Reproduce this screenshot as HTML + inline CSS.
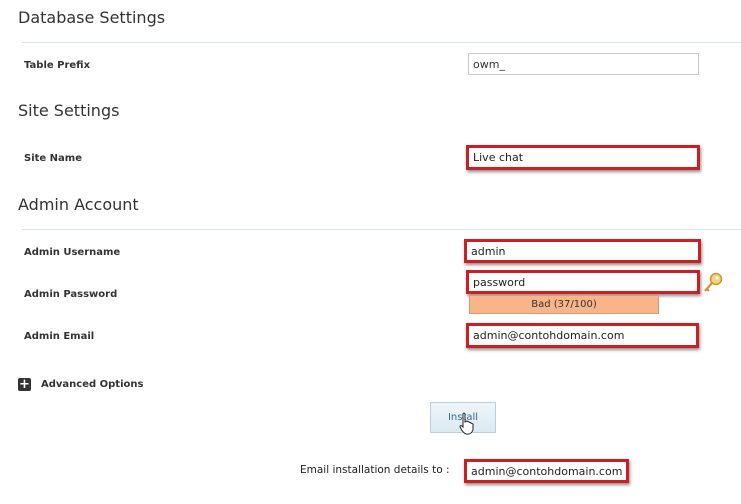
<!DOCTYPE html>
<html><head><style>
body{margin:0;width:741px;height:504px;background:#fff;position:relative;overflow:hidden;font-family:"DejaVu Sans","Liberation Sans",sans-serif;color:#333}
.a{position:absolute}
.h{font-family:"DejaVu Sans",sans-serif;font-size:16px;color:#333;left:18px}
.l{font-size:10px;font-weight:bold;left:24px;color:#333}
.ln{left:22px;right:0;height:1px;background:#d6e2e8}
.r{border:3px solid #cc1f24;box-shadow:1px 2px 3px rgba(0,0,0,.45);background:#fff;box-sizing:border-box;font-size:11px;padding-left:4px;line-height:19px;color:#222}
</style></head><body>
<div class="a h" style="top:8px">Database Settings</div>
<div class="a ln" style="top:42px"></div>
<div class="a l" style="top:60px">Table Prefix</div>
<div class="a" style="left:468px;top:53px;width:231px;height:22px;border:1px solid #c8c8c8;box-sizing:border-box;font-size:11px;line-height:21px;padding-left:4px">owm_</div>
<div class="a h" style="top:101px">Site Settings</div>
<div class="a l" style="top:153px">Site Name</div>
<div class="a r" style="left:466px;top:145px;width:234px;height:25px">Live chat</div>
<div class="a h" style="top:195px">Admin Account</div>
<div class="a ln" style="top:229px"></div>
<div class="a l" style="top:247px">Admin Username</div>
<div class="a r" style="left:464px;top:239px;width:237px;height:24px">admin</div>
<div class="a l" style="top:289px">Admin Password</div>
<div class="a r" style="left:466px;top:270px;width:234px;height:24px">password</div>
<svg class="a" style="left:702px;top:271px" width="22" height="24" viewBox="0 0 22 24"><circle cx="14" cy="8" r="5.5" fill="#f2d27a" stroke="#c9962f" stroke-width="1.5"/><circle cx="15" cy="7" r="1.5" fill="#fff"/><path d="M10 12 L3 20 M5 18 L7 20" stroke="#c9962f" stroke-width="2.2" fill="none"/></svg>
<div class="a" style="left:469px;top:295px;width:190px;height:19px;background:#f9b48a;border:1px solid #d99b75;box-sizing:border-box;font-size:10px;text-align:center;line-height:17px;color:#333">Bad (37/100)</div>
<div class="a l" style="top:331px">Admin Email</div>
<div class="a r" style="left:466px;top:323px;width:233px;height:25px">admin@contohdomain.com</div>
<div class="a" style="left:18px;top:378px;width:13px;height:13px;background:#333;border-radius:2px;color:#fff;font-size:13px;font-weight:bold;line-height:13px;text-align:center">+</div>
<div class="a" style="left:41px;top:379px;font-size:10px;font-weight:bold">Advanced Options</div>
<div class="a" style="left:430px;top:402px;width:66px;height:31px;background:linear-gradient(#eef5fa,#dceaf3);border:1px solid #b9cfdd;box-sizing:border-box;font-size:10px;color:#3a6a8e;text-align:center;line-height:29px">Install</div>
<svg class="a" style="left:458px;top:412px" width="18" height="24" viewBox="0 0 18 24"><path d="M5 2 Q6 0 7 2 L7 10 L9 9 L11 10 L13 11 L15 12 L15 18 Q13 23 8 22 Q5 21 2 15 Q2 13 4 14 L5 15 Z" fill="#fff" stroke="#222" stroke-width="1"/></svg>
<div class="a" style="left:300px;top:464px;font-size:10.5px;color:#222">Email installation details to :</div>
<div class="a r" style="left:464px;top:459px;width:165px;height:24px;font-size:11px">admin@contohdomain.com</div>
</body></html>
